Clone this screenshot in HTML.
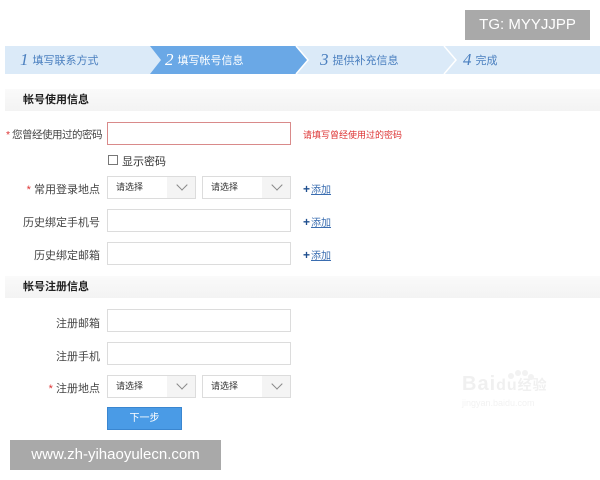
<!DOCTYPE html>
<html><head><meta charset="utf-8"><style>
*{margin:0;padding:0;box-sizing:border-box}
body{width:600px;height:480px;background:#fff;position:relative;overflow:hidden;font-family:"Liberation Sans","Noto Sans CJK SC",sans-serif;font-size:11px;color:#333}
.a{position:absolute}
.tg{left:465px;top:10px;width:125px;height:30px;background:#a9a9a9;color:#fff;font-size:15px;line-height:30px;text-align:center}
.wm{left:10px;top:440px;width:211px;height:30px;background:#a9a9a9;color:#fff;font-size:15px;line-height:30px;text-align:center}
.bar{left:5px;top:46px;width:595px;height:28px;background:#dbeaf8}
.step{top:46px;height:28px;line-height:28px;color:#4a7fbf;font-size:11px}
.step i{font-family:"Liberation Serif",serif;font-size:17px;font-style:italic;margin-right:4px;vertical-align:-1px}
.sec{left:5px;width:595px;height:22px;background:linear-gradient(#fafafa,#f3f3f3);font-weight:bold;font-size:11px;line-height:22px;padding-left:18px;color:#222}
.lbl{width:100px;text-align:right;left:0;font-size:11px;color:#444;white-space:nowrap}
.in{border:1px solid #dcdcdc;background:#fff;height:23px}
.sel{border:1px solid #dcdcdc;height:23px;background:#fff;font-size:9px;line-height:21px;padding-left:8px;color:#333}
.sel:after{content:"";position:absolute;right:0;top:0;width:28px;height:21px;background:#f4f4f4}
.sel b{position:absolute;right:9px;top:4px;width:8px;height:8px;border-right:1px solid #888;border-bottom:1px solid #888;transform:rotate(45deg);z-index:1}
.add{color:#3a6db0;font-size:10px;text-decoration:underline}
.add span{text-decoration:none;display:inline-block;color:#1f4f8f;font-weight:bold;font-size:12px;margin-right:1px}
.star{color:#d33}
</style></head><body>
<div class="a tg">TG: MYYJJPP</div>
<div class="a bar"></div>
<svg class="a" style="left:0;top:46px" width="600" height="28">
<polygon points="150,0 296,0 308,14 296,28 150,28 161,14" fill="#6aa8e6"/>
<polyline points="296,0 308,14 296,28" fill="none" stroke="#fff" stroke-width="1.5"/>
<polyline points="444,0 456,14 444,28" fill="none" stroke="#fff" stroke-width="1.5"/>
</svg>
<div class="a step" style="left:20px"><i>1</i>填写联系方式</div>
<div class="a step" style="left:165px;color:#fff"><i>2</i>填写帐号信息</div>
<div class="a step" style="left:320px"><i>3</i>提供补充信息</div>
<div class="a step" style="left:463px"><i>4</i>完成</div>

<div class="a sec" style="top:89px">帐号使用信息</div>
<div class="a lbl" style="top:127px;left:0;width:102px;font-size:10.5px;letter-spacing:-0.5px"><span class="star">* </span>您曾经使用过的密码</div>
<div class="a in" style="left:107px;top:122px;width:184px;border-color:#d98a8a"></div>
<div class="a" style="left:303px;top:128px;color:#d33;font-size:9px">请填写曾经使用过的密码</div>
<div class="a" style="left:108px;top:155px;width:10px;height:10px;border:1px solid #777"></div>
<div class="a" style="left:122px;top:153px;font-size:11px">显示密码</div>
<div class="a lbl" style="top:181px"><span class="star">* </span>常用登录地点</div>
<div class="a sel" style="left:107px;top:176px;width:89px">请选择<b></b></div>
<div class="a sel" style="left:202px;top:176px;width:89px">请选择<b></b></div>
<div class="a add" style="left:303px;top:181px"><span>+</span>添加</div>
<div class="a lbl" style="top:214px">历史绑定手机号</div>
<div class="a in" style="left:107px;top:209px;width:184px"></div>
<div class="a add" style="left:303px;top:214px"><span>+</span>添加</div>
<div class="a lbl" style="top:247px">历史绑定邮箱</div>
<div class="a in" style="left:107px;top:242px;width:184px"></div>
<div class="a add" style="left:303px;top:247px"><span>+</span>添加</div>

<div class="a sec" style="top:276px">帐号注册信息</div>
<div class="a lbl" style="top:315px">注册邮箱</div>
<div class="a in" style="left:107px;top:309px;width:184px"></div>
<div class="a lbl" style="top:348px">注册手机</div>
<div class="a in" style="left:107px;top:342px;width:184px"></div>
<div class="a lbl" style="top:380px"><span class="star">* </span>注册地点</div>
<div class="a sel" style="left:107px;top:375px;width:89px">请选择<b></b></div>
<div class="a sel" style="left:202px;top:375px;width:89px">请选择<b></b></div>
<div class="a" style="left:107px;top:407px;width:75px;height:23px;background:#4a9be6;border:1px solid #3a86d0;color:#fff;text-align:center;line-height:21px;font-size:10px">下一步</div>

<div class="a" style="left:462px;top:373px;color:#f0f0f0;font-size:20px;font-weight:bold;letter-spacing:1px">Bai<span style="font-size:16px">du</span><span style="font-size:14px">经验</span></div>
<svg class="a" style="left:505px;top:368px" width="30" height="14"><g fill="#f2f2f2"><circle cx="6" cy="8" r="3"/><circle cx="13" cy="5" r="3"/><circle cx="20" cy="5" r="3"/><circle cx="26" cy="9" r="3"/></g></svg>
<div class="a" style="left:462px;top:398px;color:#f2f2f2;font-size:9px">jingyan.baidu.com</div>

<div class="a wm">www.zh-yihaoyulecn.com</div>
</body></html>
